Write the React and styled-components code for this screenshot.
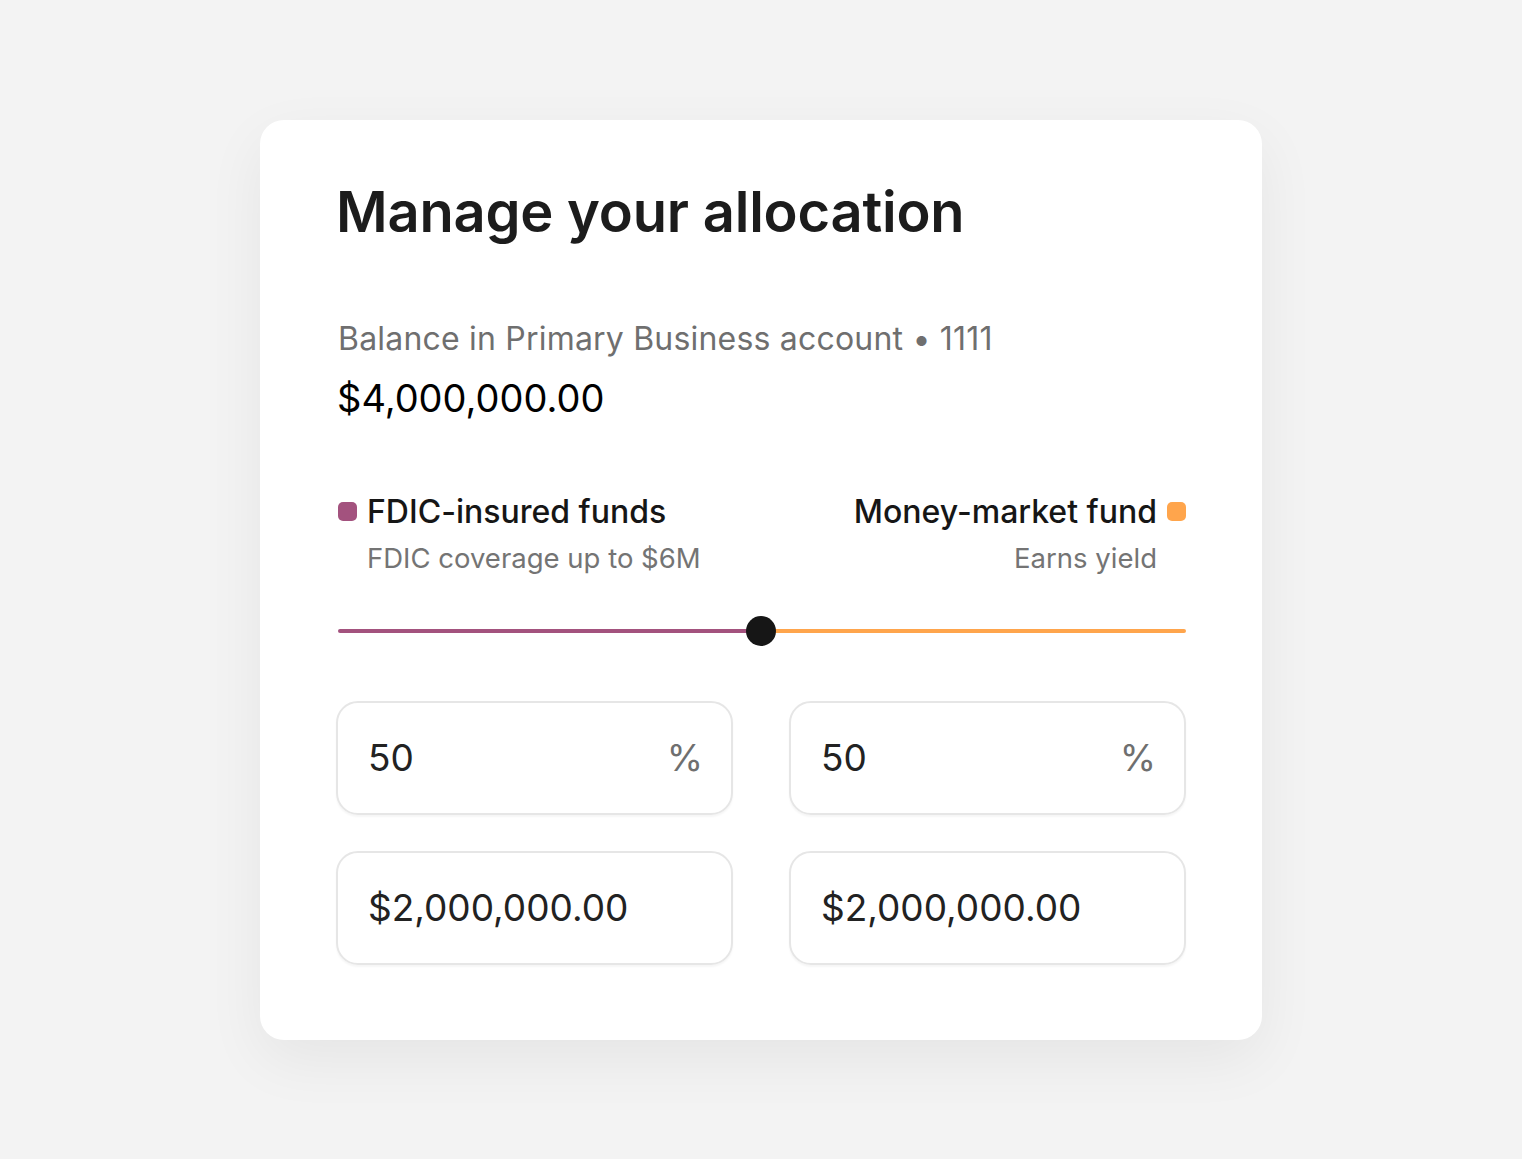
import styled, { createGlobalStyle } from "styled-components";

const Global = createGlobalStyle`
  html, body { margin: 0; padding: 0; }
  body {
    background: #f3f3f3;
    font-family: Inter, "Noto Sans", sans-serif;
    -webkit-font-smoothing: antialiased;
  }
`;

const Page = styled.div`
  min-height: 1159px;
  display: flex;
  align-items: center;
  justify-content: center;
`;

const Card = styled.div`
  width: 1002px;
  box-sizing: border-box;
  padding: 52px 76px 75px;
  background: #fff;
  border-radius: 24px;
  box-shadow: 0 20px 60px rgba(0, 0, 0, 0.06);
`;

const Title = styled.h1`
  margin: 0;
  font-size: 56px;
  font-weight: 600;
  line-height: 80px;
  color: #1c1c1c;
  letter-spacing: -0.2px;
`;

const Caption = styled.div`
  margin-top: 67px;
  font-size: 32px;
  line-height: 40px;
  color: #6f6f6f;
  letter-spacing: 0.2px;
  padding-left: 2px;
`;

const Balance = styled.div`
  margin-top: 18px;
  font-size: 38px;
  line-height: 42px;
  color: #000;
  padding-left: 1px;
`;

const Legend = styled.div`
  margin-top: 73px;
  display: flex;
  justify-content: space-between;
  padding: 0 0 0 2px;
`;

const Fund = styled.div`
  display: flex;
  flex-direction: column;
  align-items: ${(p) => (p.right ? "flex-end" : "flex-start")};
`;

const FundName = styled.div`
  display: flex;
  align-items: center;
  gap: 10px;
  flex-direction: ${(p) => (p.right ? "row-reverse" : "row")};
  font-size: 32px;
  font-weight: 500;
  line-height: 40px;
  color: #161616;
`;

const Swatch = styled.span`
  width: 19px;
  height: 19px;
  border-radius: 5px;
  background: ${(p) => p.color};
`;

const FundNote = styled.div`
  margin-top: 9px;
  font-size: 27.5px;
  line-height: 34px;
  color: #747474;
  ${(p) => (p.right ? "margin-right: 29px;" : "margin-left: 29px;")}
`;

const Slider = styled.div`
  position: relative;
  margin-top: 41px;
  height: 30px;
  display: flex;
  align-items: center;
  padding-left: 2px;
`;

const Track = styled.div`
  flex: 1;
  height: 4px;
  border-radius: 2px;
  background: linear-gradient(
    to right,
    #a3527e 0%,
    #a3527e 50%,
    #ffa54c 50%,
    #ffa54c 100%
  );
`;

const Thumb = styled.div`
  position: absolute;
  top: 0;
  left: calc(50% - 15px);
  width: 30px;
  height: 30px;
  border-radius: 50%;
  background: #161616;
`;

const Grid = styled.div`
  margin-top: 55px;
  display: grid;
  grid-template-columns: 1fr 1fr;
  column-gap: 56px;
  row-gap: 36px;
`;

const Field = styled.div`
  height: 114px;
  box-sizing: border-box;
  border: 2px solid #e6e6e6;
  border-radius: 22px;
  box-shadow: 0 2px 2px rgba(0, 0, 0, 0.04);
  display: flex;
  align-items: center;
  justify-content: space-between;
  padding: 0 28px 0 30px;
  font-size: 37px;
  color: #222;
`;

const Unit = styled.span`
  color: #6f6f6f;
`;

export default function App() {
  return (
    <Page>
      <Global />
      <Card>
        <Title>Manage your allocation</Title>
        <Caption>Balance in Primary Business account • 1111</Caption>
        <Balance>$4,000,000.00</Balance>
        <Legend>
          <Fund>
            <FundName>
              <Swatch color="#a3527e" />
              FDIC-insured funds
            </FundName>
            <FundNote>FDIC coverage up to $6M</FundNote>
          </Fund>
          <Fund right>
            <FundName right>
              <Swatch color="#ffa54c" />
              Money-market fund
            </FundName>
            <FundNote right>Earns yield</FundNote>
          </Fund>
        </Legend>
        <Slider>
          <Track />
          <Thumb />
        </Slider>
        <Grid>
          <Field>
            50<Unit>%</Unit>
          </Field>
          <Field>
            50<Unit>%</Unit>
          </Field>
          <Field>$2,000,000.00</Field>
          <Field>$2,000,000.00</Field>
        </Grid>
      </Card>
    </Page>
  );
}
